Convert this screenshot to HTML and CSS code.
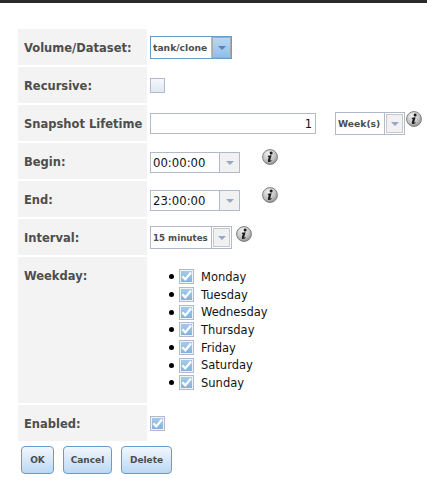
FILE: index.html
```html
<!DOCTYPE html>
<html lang="en">
<head>
    <meta charset="UTF-8">
    <title>Periodic Snapshot Task</title>
    <link rel="stylesheet" href="styles.css">
</head>
<body>
    <svg class="defs" width="0" height="0">
        <defs>
            <radialGradient id="info-fill" cx="40%" cy="30%" r="75%">
                <stop offset="0" stop-color="#f2f2f2"/>
                <stop offset="0.6" stop-color="#c4c4c4"/>
                <stop offset="1" stop-color="#8e8e8e"/>
            </radialGradient>
            <symbol id="info" viewBox="0 0 17 17">
                <circle cx="8.5" cy="8.5" r="7.9" fill="url(#info-fill)" stroke="#6f6f6f" stroke-width="0.9"/>
                <circle cx="9.7" cy="4.2" r="1.6" fill="#1c1c1c"/>
                <path d="M6.2 7.2 L10.2 6.6 L8.7 12 Q8.6 12.8 9.8 11.8 L10.3 12.4 Q8.6 14.2 6.9 13.9 Q5.9 13.5 6.3 12 L7.2 8.4 L6.1 8.2 Z" fill="#1c1c1c"/>
            </symbol>
            <symbol id="tick" viewBox="0 0 11 11">
                <path d="M1.4 5.4 L4.3 8.4 L10 1.6" fill="none" stroke="#fff" stroke-width="2.3"/>
            </symbol>
        </defs>
    </svg>

    <div class="topbar"></div>

    <form class="form">
        <table class="fields">
            <tr>
                <th>Volume/Dataset:</th>
                <td class="row-combo">
                    <div class="combo combo-focus combo-small">
                        <span class="combo-value">tank/clone</span>
                        <span class="combo-btn"><i class="arrow"></i></span>
                    </div>
                </td>
            </tr>
            <tr>
                <th>Recursive:</th>
                <td class="row-check"><span class="check"></span></td>
            </tr>
            <tr>
                <th>Snapshot Lifetime</th>
                <td class="row-combo">
                    <div class="line">
                        <span class="textbox">1</span>
                        <div class="combo combo-small unit">
                            <span class="combo-value">Week(s)</span>
                            <span class="combo-btn boxed"><i class="arrow"></i></span>
                        </div>
                        <svg class="info info-tight"><use href="#info"/></svg>
                    </div>
                </td>
            </tr>
            <tr>
                <th>Begin:</th>
                <td class="row-time">
                    <div class="line">
                        <div class="combo time">
                            <span class="combo-value">00:00:00</span>
                            <span class="combo-btn"><i class="arrow"></i></span>
                        </div>
                        <svg class="info info-wide"><use href="#info"/></svg>
                    </div>
                </td>
            </tr>
            <tr>
                <th>End:</th>
                <td class="row-time">
                    <div class="line">
                        <div class="combo time">
                            <span class="combo-value">23:00:00</span>
                            <span class="combo-btn"><i class="arrow"></i></span>
                        </div>
                        <svg class="info info-wide"><use href="#info"/></svg>
                    </div>
                </td>
            </tr>
            <tr>
                <th>Interval:</th>
                <td class="row-combo">
                    <div class="line">
                        <div class="combo combo-small interval">
                            <span class="combo-value">15 minutes</span>
                            <span class="combo-btn boxed"><i class="arrow"></i></span>
                        </div>
                        <svg class="info info-near"><use href="#info"/></svg>
                    </div>
                </td>
            </tr>
            <tr>
                <th class="top">Weekday:</th>
                <td class="days-cell">
                    <ul class="days">
                        <li><span class="check checked"><svg><use href="#tick"/></svg></span>Monday</li>
                        <li><span class="check checked"><svg><use href="#tick"/></svg></span>Tuesday</li>
                        <li><span class="check checked"><svg><use href="#tick"/></svg></span>Wednesday</li>
                        <li><span class="check checked"><svg><use href="#tick"/></svg></span>Thursday</li>
                        <li><span class="check checked"><svg><use href="#tick"/></svg></span>Friday</li>
                        <li><span class="check checked"><svg><use href="#tick"/></svg></span>Saturday</li>
                        <li><span class="check checked"><svg><use href="#tick"/></svg></span>Sunday</li>
                    </ul>
                </td>
            </tr>
            <tr>
                <th>Enabled:</th>
                <td class="row-check"><span class="check checked"><svg><use href="#tick"/></svg></span></td>
            </tr>
        </table>
        <div class="buttons">
            <button type="button" class="btn btn-ok">OK</button>
            <button type="button" class="btn btn-cancel">Cancel</button>
            <button type="button" class="btn btn-delete">Delete</button>
        </div>
    </form>
</body>
</html>
```

FILE: styles.css
```css
body, html {
    margin: 0;
    padding: 0;
    background: #fff;
    font-family: "DejaVu Sans", Verdana, sans-serif;
    font-size: 11.5px;
    color: #131313;
}
.defs {
    position: absolute;
}
.topbar {
    height: 3px;
    background: #2b2b2b;
}
.form {
    padding: 24px 0 0 18px;
}
.fields {
    border-collapse: separate;
    border-spacing: 0 2px;
}
.fields th {
    width: 129px;
    height: 36px;
    box-sizing: border-box;
    padding: 2px 0 0 6px;
    background: #f3f3f3;
    color: #4d4d4d;
    font-size: 11.5px;
    font-weight: bold;
    text-align: left;
    white-space: nowrap;
}
.fields th.top {
    height: 146px;
    vertical-align: top;
    padding-top: 12px;
}
.fields td {
    padding: 0 0 0 3px;
    vertical-align: top;
}
.fields td.row-combo {
    padding-top: 7px;
}
.fields td.row-time {
    padding-top: 9px;
}
.fields td.row-check {
    padding-top: 11px;
}
.line {
    display: flex;
    align-items: flex-start;
}
.combo {
    display: inline-flex;
    box-sizing: border-box;
    width: 82px;
    height: 23px;
    justify-content: space-between;
    vertical-align: top;
    border: 1px solid #b3b9cc;
    background: #fff;
    font-size: 11.7px;
}
.combo-small {
    color: #4d4d4d;
    font-size: 9.2px;
    font-weight: bold;
}
.interval {
    font-size: 8.7px;
}
.combo-focus {
    border-color: #6b9bc7;
}
.combo-value {
    display: flex;
    align-items: center;
    padding: 0 0 0 2px;
    white-space: nowrap;
}
.time {
    width: 90px;
    height: 21px;
}
.combo-btn {
    width: 20px;
    box-sizing: border-box;
    display: flex;
    align-items: center;
    justify-content: center;
    border-left: 1px solid #b3b9cc;
    background: #f1f1f1;
}
.combo-btn.boxed {
    box-shadow: inset 0 0 0 1px #fff, inset 0 0 0 2px #c8c8c8;
}
.combo-focus .combo-btn {
    background: linear-gradient(#bcd8f4, #8fbdec);
    box-shadow: inset 0 0 0 1px #aaa;
}
.arrow {
    width: 0;
    height: 0;
    border-left: 4px solid transparent;
    border-right: 4px solid transparent;
    border-top: 4px solid #95a8c9;
}
.combo-focus .arrow {
    border-top-color: #5f7fae;
}
.textbox {
    display: block;
    box-sizing: border-box;
    width: 166px;
    height: 21px;
    margin-top: 1px;
    padding-right: 3px;
    line-height: 20px;
    border: 1px solid #b3b9cc;
    text-align: right;
}
.unit {
    width: 70px;
    margin-left: 19px;
}
.info {
    width: 16px;
    height: 16px;
    flex: none;
}
.info-tight {
    margin: -1px 0 0 1px;
}
.info-wide {
    margin: -3px 0 0 22px;
}
.info-near {
    margin: 0 0 0 4px;
}
.check {
    display: block;
    box-sizing: border-box;
    flex: none;
    width: 15px;
    height: 15px;
    padding: 1px;
    border: 1px solid #b3b9cc;
    background: linear-gradient(#f6f8fc, #dfe8f3);
}
.check.checked {
    background: linear-gradient(#a9cdea, #7fb0dc);
    box-shadow: inset 0 0 0 1px #eef3f9;
}
.check svg {
    display: block;
    width: 11px;
    height: 11px;
}
.days {
    list-style: none;
    margin: 11px 0 0;
    padding: 0 0 0 19px;
}
.days li {
    display: flex;
    align-items: center;
    height: 17.7px;
    white-space: nowrap;
}
.days li::before {
    content: "";
    width: 5px;
    height: 5px;
    margin-right: 5px;
    border-radius: 50%;
    background: #000;
}
.days .check {
    margin-right: 7px;
}
.buttons {
    display: flex;
    gap: 9px;
    padding: 3px 0 0 3px;
}
.btn {
    height: 28px;
    padding: 0;
    border: 1px solid #6b9bc7;
    border-radius: 4px;
    background: linear-gradient(#f2f7fd, #bcd8f4);
    color: #4d4d4d;
    font-family: inherit;
    font-size: 9px;
    font-weight: bold;
}
.btn-ok {
    width: 33px;
}
.btn-cancel {
    width: 49px;
}
.btn-delete {
    width: 51px;
}
```
